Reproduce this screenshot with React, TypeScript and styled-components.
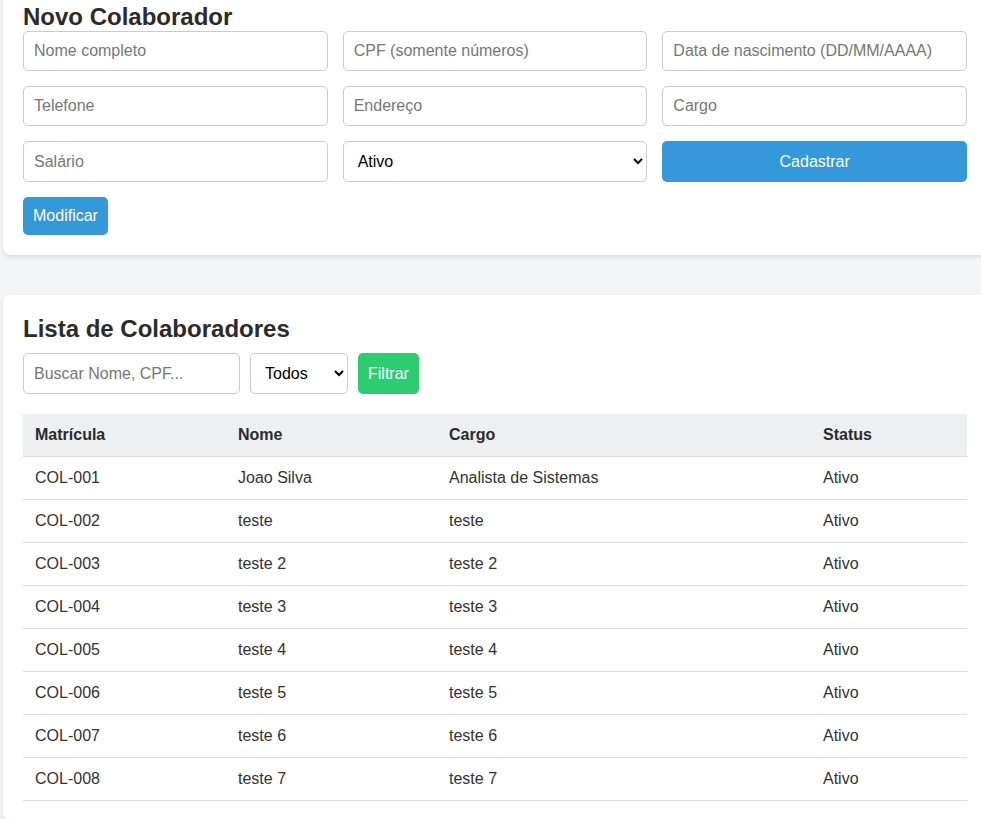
import React from "react";
import styled, { createGlobalStyle } from "styled-components";

const Global = createGlobalStyle`
  html, body { margin: 0; padding: 0; overflow-x: hidden; }
  body {
    background: #f4f5f7;
    font-family: "Liberation Sans", Arial, sans-serif;
    color: #333;
  }
  * { box-sizing: border-box; }
`;

const Page = styled.div`
  width: 984px;
  margin-left: 3px;
  display: flex;
  flex-direction: column;
  gap: 40px;
  margin-top: -17px;
`;

const Card = styled.section`
  background: #fff;
  border-radius: 8px;
  padding: 20px;
  box-shadow: 0 2px 5px rgba(0, 0, 0, 0.1);
`;

const Title = styled.h2<{ $mb: number }>`
  margin: 0 0 ${(p) => p.$mb}px 0;
  font-size: 24px;
  font-weight: bold;
  color: #2b2b2b;
  line-height: normal;
`;

const FormGrid = styled.div`
  display: grid;
  grid-template-columns: repeat(3, 1fr);
  gap: 15px;
`;

const Input = styled.input<{ $w?: number; $h?: number }>`
  font-family: "Liberation Sans", Arial, sans-serif;
  font-size: 16px;
  padding: 10px;
  border: 1px solid #ccc;
  border-radius: 5px;
  height: ${(p) => p.$h ?? 40}px;
  width: ${(p) => (p.$w ? `${p.$w}px` : "100%")};
  color: #333;
  background: #fff;
  outline: none;
  &::placeholder { color: #777; }
`;

const Select = styled.select<{ $w?: number }>`
  font-family: "Liberation Sans", Arial, sans-serif;
  font-size: 16px;
  padding: 10px;
  border: 1px solid #ccc;
  border-radius: 5px;
  height: 41px;
  width: ${(p) => (p.$w ? `${p.$w}px` : "100%")};
  color: #000;
  background: #fff;
`;

const Button = styled.button<{ $bg: string; $full?: boolean }>`
  font-family: "Liberation Sans", Arial, sans-serif;
  font-size: 16px;
  padding: 10px;
  border: none;
  border-radius: 5px;
  background: ${(p) => p.$bg};
  color: #fff;
  cursor: pointer;
  width: ${(p) => (p.$full ? "100%" : "auto")};
  line-height: 18px;
`;

const Actions = styled.div`
  margin-top: 15px;
  display: flex;
`;

const FilterRow = styled.div`
  display: flex;
  gap: 10px;
  margin-bottom: 20px;
  align-items: stretch;
`;

const Table = styled.table`
  width: 944px;
  border-collapse: collapse;
  table-layout: fixed;
  font-size: 16px;
`;

const Th = styled.th<{ $w: number }>`
  width: ${(p) => p.$w}px;
  text-align: left;
  background: #ecf0f1;
  padding: 12px;
  border-bottom: 1px solid #ddd;
  font-weight: bold;
  color: #2b2b2b;
  line-height: 18px;
`;

const Td = styled.td`
  padding: 12px;
  border-bottom: 1px solid #ddd;
  color: #333;
  line-height: 18px;
`;

const rows = [
  ["COL-001", "Joao Silva", "Analista de Sistemas", "Ativo"],
  ["COL-002", "teste", "teste", "Ativo"],
  ["COL-003", "teste 2", "teste 2", "Ativo"],
  ["COL-004", "teste 3", "teste 3", "Ativo"],
  ["COL-005", "teste 4", "teste 4", "Ativo"],
  ["COL-006", "teste 5", "teste 5", "Ativo"],
  ["COL-007", "teste 6", "teste 6", "Ativo"],
  ["COL-008", "teste 7", "teste 7", "Ativo"],
];

export default function App() {
  return (
    <>
      <Global />
      <Page>
        <Card>
          <Title $mb={0}>Novo Colaborador</Title>
          <FormGrid>
            <Input placeholder="Nome completo" />
            <Input placeholder="CPF (somente números)" />
            <Input placeholder="Data de nascimento (DD/MM/AAAA)" />
            <Input placeholder="Telefone" />
            <Input placeholder="Endereço" />
            <Input placeholder="Cargo" />
            <Input placeholder="Salário" $h={41} />
            <Select defaultValue="Ativo">
              <option>Ativo</option>
              <option>Inativo</option>
            </Select>
            <Button $bg="#3498db" $full>Cadastrar</Button>
          </FormGrid>
          <Actions>
            <Button $bg="#3498db">Modificar</Button>
          </Actions>
        </Card>
        <Card>
          <Title $mb={10}>Lista de Colaboradores</Title>
          <FilterRow>
            <Input $w={217} $h={41} placeholder="Buscar Nome, CPF..." />
            <Select $w={98} defaultValue="Todos">
              <option>Todos</option>
              <option>Ativo</option>
              <option>Inativo</option>
            </Select>
            <Button $bg="#2ecc71">Filtrar</Button>
          </FilterRow>
          <Table>
            <thead>
              <tr>
                <Th $w={203}>Matrícula</Th>
                <Th $w={211}>Nome</Th>
                <Th $w={374}>Cargo</Th>
                <Th $w={156}>Status</Th>
              </tr>
            </thead>
            <tbody>
              {rows.map((r) => (
                <tr key={r[0]}>
                  {r.map((c, i) => (
                    <Td key={i}>{c}</Td>
                  ))}
                </tr>
              ))}
            </tbody>
          </Table>
        </Card>
      </Page>
    </>
  );
}
